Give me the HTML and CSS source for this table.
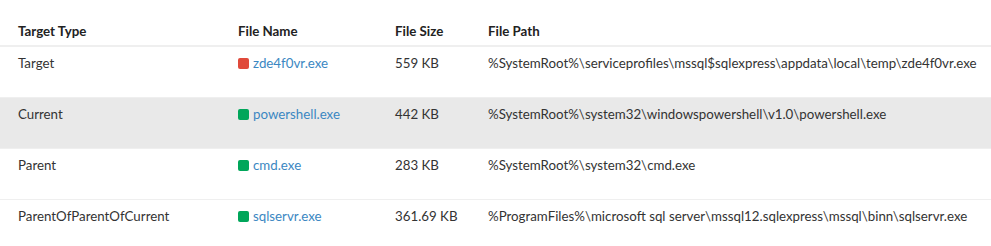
FILE: index.html
```html
<!DOCTYPE html>
<html lang="en">
<head>
    <meta charset="UTF-8">
    <title>Process targets</title>
    <link rel="stylesheet" href="styles.css">
</head>
<body>
    <table class="targets">
        <thead>
            <tr>
                <th class="col-type">Target Type</th>
                <th class="col-name">File Name</th>
                <th class="col-size">File Size</th>
                <th class="col-path">File Path</th>
            </tr>
        </thead>
        <tbody>
            <tr>
                <td>Target</td>
                <td><span class="status bad"></span><a href="#">zde4f0vr.exe</a></td>
                <td>559 KB</td>
                <td>%SystemRoot%\serviceprofiles\mssql$sqlexpress\appdata\local\temp\zde4f0vr.exe</td>
            </tr>
            <tr class="current">
                <td>Current</td>
                <td><span class="status good"></span><a href="#">powershell.exe</a></td>
                <td>442 KB</td>
                <td>%SystemRoot%\system32\windowspowershell\v1.0\powershell.exe</td>
            </tr>
            <tr>
                <td>Parent</td>
                <td><span class="status good"></span><a href="#">cmd.exe</a></td>
                <td>283 KB</td>
                <td>%SystemRoot%\system32\cmd.exe</td>
            </tr>
            <tr>
                <td>ParentOfParentOfCurrent</td>
                <td><span class="status good"></span><a href="#">sqlservr.exe</a></td>
                <td>361.69 KB</td>
                <td>%ProgramFiles%\microsoft sql server\mssql12.sqlexpress\mssql\binn\sqlservr.exe</td>
            </tr>
        </tbody>
    </table>
</body>
</html>
```

FILE: styles.css
```css
body {
    margin: 0;
    padding: 0;
    font-family: Lato, 'Open Sans', sans-serif;
    font-size: 13.3px;
    color: #333;
    background: #fff;
}

a {
    color: #3b87c2;
    text-decoration: none;
}

.targets {
    width: 100%;
    border-collapse: collapse;
    table-layout: fixed;
}

    .targets th,
    .targets td {
        box-sizing: border-box;
        text-align: left;
        padding: 0;
        white-space: nowrap;
        line-height: 16px;
    }

    .targets th {
        padding-top: 23px;
        padding-bottom: 6px;
        vertical-align: top;
        font-weight: 700;
        color: #222;
        border-bottom: 2px solid #efefef;
    }

    .targets td {
        height: 51px;
        vertical-align: top;
        padding-top: 8px;
        border-bottom: 1px solid #efefef;
    }

    .targets th:first-child,
    .targets td:first-child {
        padding-left: 18px;
    }

    .targets .col-type {
        width: 238px;
    }

    .targets .col-name {
        width: 157px;
    }

    .targets .col-size {
        width: 93px;
    }

    .targets tr.current td {
        background-color: #e9e9e9;
    }

.status {
    display: inline-block;
    width: 11px;
    height: 11px;
    border-radius: 2px;
    margin-right: 4px;
    vertical-align: -1px;
}

    .status.bad {
        background-color: #e04a3b;
    }

    .status.good {
        background-color: #00a65a;
    }
```
